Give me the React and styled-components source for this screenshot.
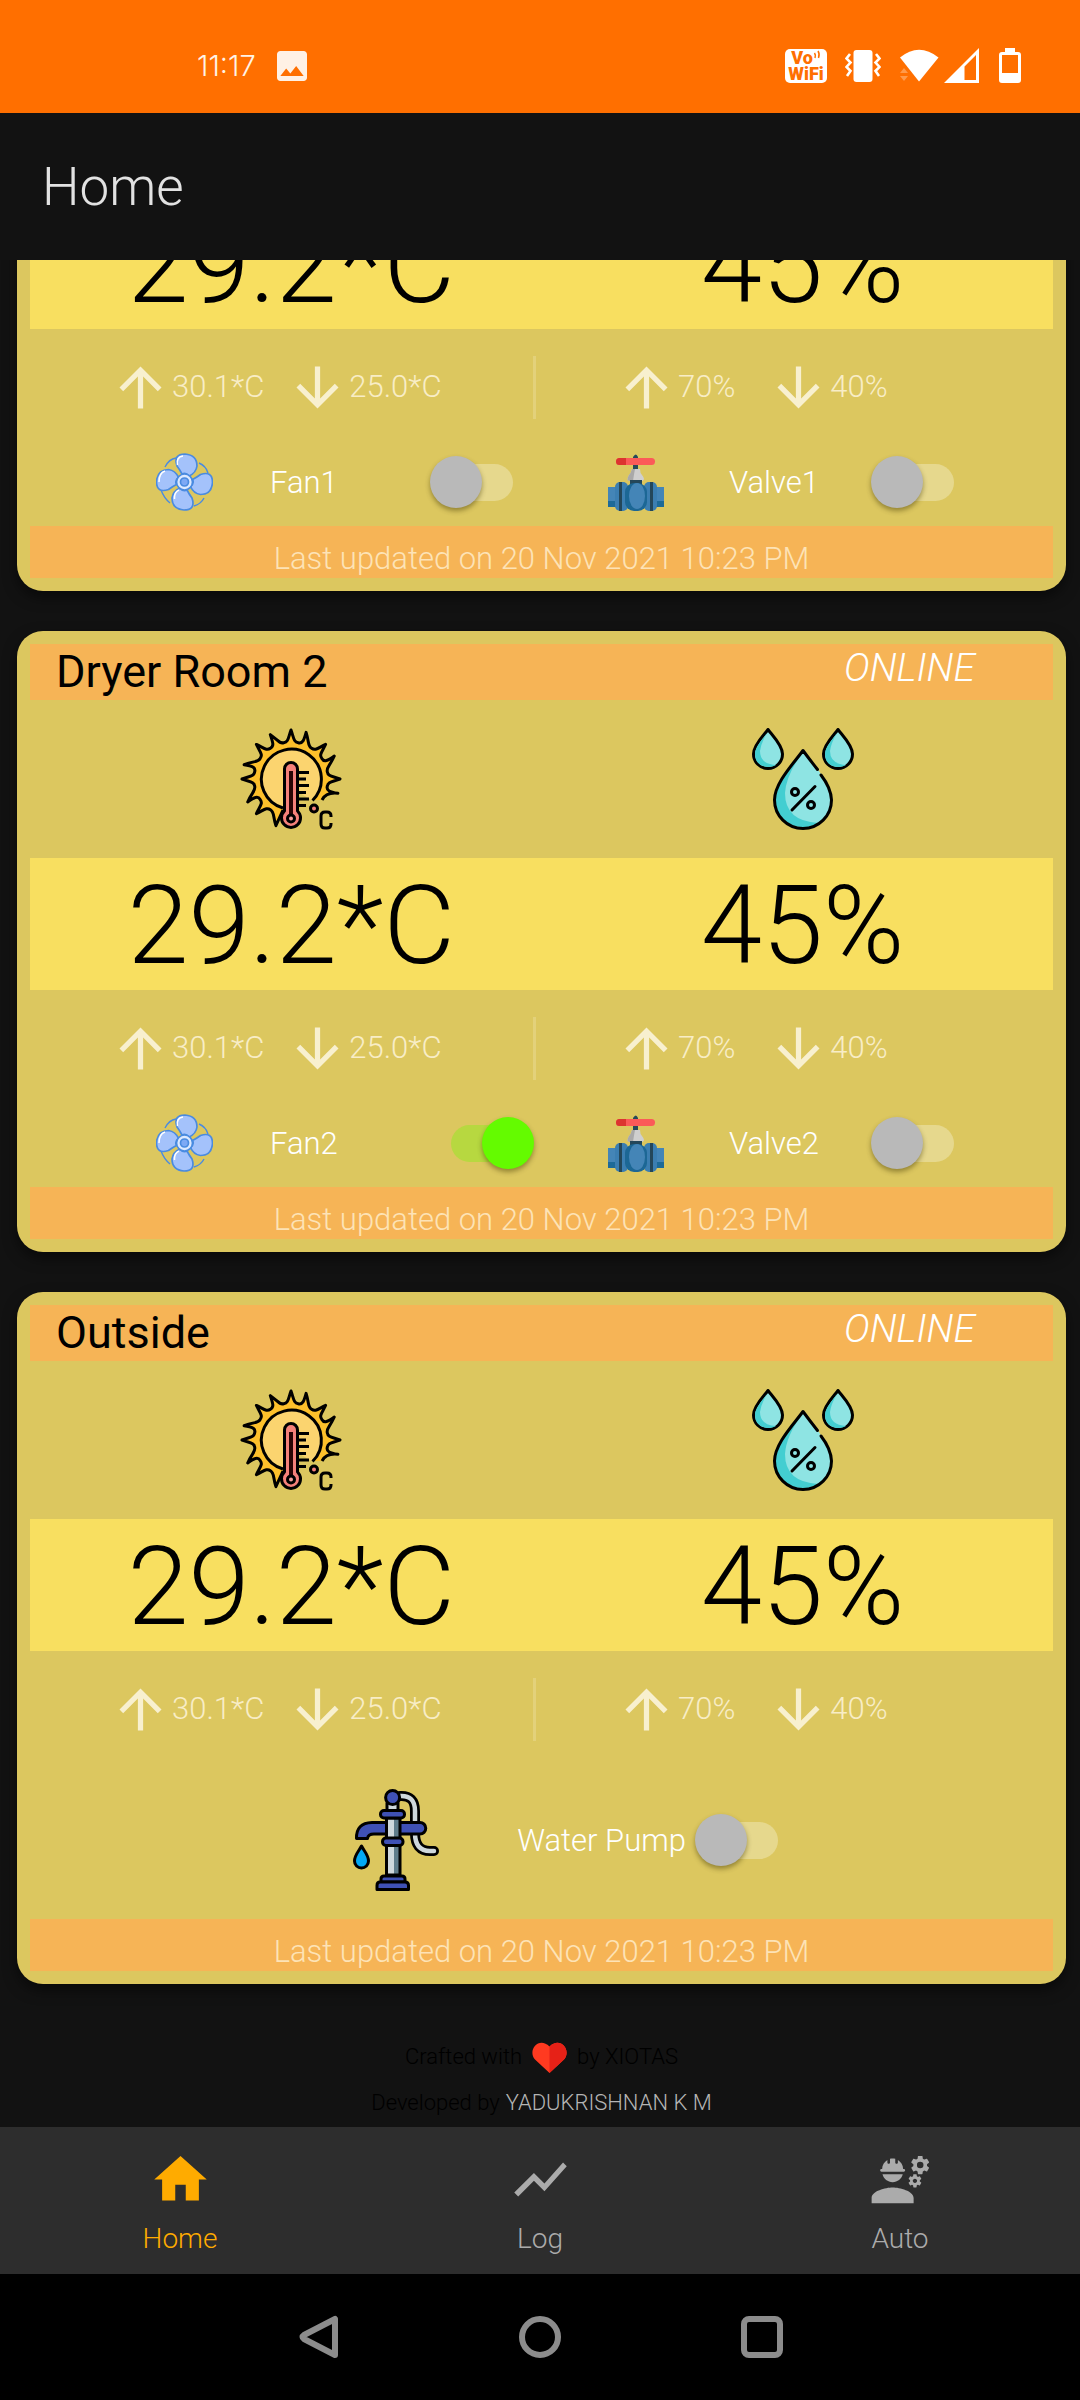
import React, { useId, useState } from "react";
import styled, { createGlobalStyle } from "styled-components";
import { MdArrowUpward, MdArrowDownward, MdHome, MdShowChart, MdEngineering, MdImage } from "react-icons/md";

const GlobalStyle = createGlobalStyle`
  * { box-sizing: border-box; }
  body {
    margin: 0;
    background: #000;
    font-family: Roboto, "Liberation Sans", Arial, sans-serif;
    font-weight: 300;
  }
`;

const Screen = styled.div`
  display: flex;
  flex-direction: column;
  height: 100vh;
  background: #121212;
  color: #fff;
`;

const StatusBar = styled.header`
  flex: none;
  display: flex;
  align-items: center;
  justify-content: space-between;
  height: 113px;
  padding: 18px 58px 0 197px;
  background: #ff6f00;
`;

const StatusGroup = styled.div`
  display: flex;
  align-items: center;
  gap: ${(p) => p.$gap}px;
`;

const Clock = styled.time`
  font-family: Inter, "Liberation Sans", sans-serif;
  font-size: 29px;
  line-height: 40px;
  color: #fff3e6;
`;

const AppBar = styled.div`
  flex: none;
  display: flex;
  align-items: center;
  height: 147px;
  padding: 0 42px;
`;

const AppTitle = styled.h1`
  margin: 0;
  font-size: 53px;
  line-height: 64px;
  font-weight: 300;
  color: #e2e2e2;
`;

const Scroller = styled.main`
  flex: 1;
  min-height: 0;
  display: flex;
  flex-direction: column-reverse;
  overflow-y: auto;
  scrollbar-width: none;
`;

const Feed = styled.div`
  display: flex;
  flex-direction: column;
  gap: 40px;
  padding: 20px 14px 0 17px;
`;

const Card = styled.section`
  padding: 13px;
  border-radius: 26px;
  background: #dcc75f;
  box-shadow: 0 6px 14px rgba(0, 0, 0, 0.5);
`;

const CardHeader = styled.div`
  display: flex;
  align-items: flex-start;
  justify-content: space-between;
  height: 56px;
  padding: 0 78px 0 26px;
  background: #f6b456;
`;

const RoomName = styled.h2`
  margin: 0;
  font-size: 45px;
  line-height: 56px;
  font-weight: 400;
  color: #000;
`;

const Online = styled.em`
  font-size: 39px;
  line-height: 48px;
`;

const Pair = styled.div`
  display: grid;
  grid-template-columns: 1fr 1fr;
  align-items: center;
  height: ${(p) => p.$height}px;
  background: ${(p) => p.$fill || "transparent"};
`;

const PairCell = styled.div`
  display: flex;
  justify-content: center;
  padding-left: 11px;
`;

const Reading = styled.strong`
  padding-top: 4px;
  font-size: 110px;
  line-height: 128px;
  font-weight: 300;
  color: #000;
`;

const StatsRow = styled.div`
  display: flex;
  align-items: center;
  height: 116px;
  padding-right: 14px;
`;

const StatsGroup = styled.div`
  flex: 1;
  display: flex;
  align-items: center;
  gap: ${(p) => p.$gap}px;
  padding-left: 79px;
`;

const StatsDivider = styled.span`
  width: 3px;
  height: 63px;
  background: #e3d17a;
`;

const Stat = styled.span`
  display: flex;
  align-items: center;
  font-size: 31px;
  line-height: 40px;
  color: #f8edc6;
  svg { color: #f8f0cf; }
`;

const ControlsRow = styled.div`
  display: grid;
  grid-template-columns: 378fr 367fr;
  gap: 74px;
  padding: 8px 78px 15px 126px;
`;

const Control = styled.div`
  display: flex;
  align-items: center;
`;

const PumpRow = styled.div`
  display: flex;
  align-items: center;
  justify-content: center;
  gap: 70px;
  height: 152px;
  padding: 0 0 6px 61px;
`;

const ControlLabel = styled.label`
  flex: 1;
  padding: 2px 0 0 ${(p) => p.$inset || 0}px;
  font-size: 31px;
  line-height: 40px;
  white-space: nowrap;
`;

const PumpControl = styled.div`
  display: flex;
  align-items: center;
  gap: 9px;
`;

const Toggle = styled.input`
  appearance: none;
  flex: none;
  display: grid;
  align-items: center;
  width: 104px;
  height: 52px;
  margin: 0;
  cursor: pointer;
  &::before {
    content: "";
    grid-area: 1 / 1;
    justify-self: center;
    width: 62px;
    height: 37px;
    border-radius: 19px;
    background: #e6d88d;
  }
  &::after {
    content: "";
    grid-area: 1 / 1;
    justify-self: start;
    width: 52px;
    height: 52px;
    border-radius: 50%;
    background: #b9b9b9;
    box-shadow: 0 3px 5px rgba(60, 50, 0, 0.45);
  }
  &:checked::before { background: #b7d840; }
  &:checked::after { justify-self: end; background: #64fb00; }
`;

const Updated = styled.p`
  margin: 0;
  height: 52px;
  padding-top: 14px;
  text-align: center;
  font-size: 31px;
  line-height: 38px;
  color: #fde3b6;
  background: #f6b456;
`;

const Credits = styled.footer`
  display: flex;
  flex-direction: column;
  align-items: center;
  gap: 4px;
  padding: 12px 0 3px 0;
  font-size: 22px;
  line-height: 42px;
  color: #000;
`;

const CreditLine = styled.div`
  display: flex;
  align-items: center;
  gap: ${(p) => p.$gap}px;
`;

const Author = styled.a`
  color: #b5b5b5;
  text-decoration: none;
`;

const TabBar = styled.nav`
  flex: none;
  display: grid;
  grid-template-columns: repeat(3, 1fr);
  height: 147px;
  background: #2d2d2d;
`;

const Tab = styled.button`
  display: flex;
  flex-direction: column;
  align-items: center;
  gap: 12px;
  padding: 21px 0 0;
  border: 0;
  background: none;
  font: inherit;
  font-size: 28px;
  line-height: 32px;
  color: ${(p) => (p.$active ? "#ffab00" : "#ababab")};
`;

const SystemNav = styled.nav`
  flex: none;
  display: flex;
  justify-content: center;
  align-items: center;
  gap: 156px;
  height: 126px;
  background: #000;
`;

const SystemButton = styled.button`
  display: flex;
  justify-content: center;
  width: 66px;
  padding: 0;
  border: 0;
  background: none;
`;

const VoWifi = styled.span`
  display: flex;
  flex-direction: column;
  align-items: center;
  width: 42px;
  height: 34px;
  padding-top: 1px;
  border-radius: 5px;
  background: #fff;
  color: #ff6f00;
  font-size: 18px;
  line-height: 16px;
  font-weight: 900;
`;

const VoLine = styled.span`
  display: flex;
`;

function VoWifiBadge() {
  return (
    <VoWifi>
      <VoLine>
        Vo
        <svg width="8" height="12" viewBox="0 0 8 12" fill="none" stroke="#ff6f00" strokeWidth="1.5">
          <path d="M1.5 3q1.5 2 .5 5M5 1q2 3 .5 7" />
        </svg>
      </VoLine>
      <span>WiFi</span>
    </VoWifi>
  );
}

const VibrateIcon = () => (
  <svg width="36" height="34" viewBox="0 0 36 34">
    <rect x="8.500" y="1" width="19" height="32" rx="3" fill="#fff" />
    <path d="M5 5L1.500 9.500L5.500 13.500L1.500 18L5.500 22L2 27M31 5L34.500 9.500L30.500 13.500L34.500 18L30.500 22L34 27" fill="none" stroke="#fff" strokeWidth="2.600" />
  </svg>
);

const WifiIcon = () => (
  <svg width="40" height="34" viewBox="0 0 40 34">
    <path d="M1 8.500Q20-7 39.500 8.500L20 32.500Z" fill="#fff" />
    <path d="M1 24l4-5 4 5zM1 27h8l-4 5z" fill="#ff9a4a" />
  </svg>
);

const SignalIcon = () => (
  <svg width="36" height="36" viewBox="0 0 36 36">
    <path d="M35 0V35H0ZM32 7L20.500 18.500V32H32Z" fill="#fff" fillRule="evenodd" />
  </svg>
);

const BatteryIcon = () => (
  <svg width="24" height="36" viewBox="0 0 24 36">
    <path d="M7 0h10v4h3q3 0 3 3v25q0 3-3 3H4q-3 0-3-3V7q0-3 3-3h3zM4 7v18h16V7z" fill="#fff" fillRule="evenodd" />
  </svg>
);

const TIPS = [-162, -135, -118, -90, -73, -45, -25, 0, 18, 45, 62, 90, 107];

function polar(radius, degrees) {
  const a = (degrees * Math.PI) / 180;
  return `${(51 + radius * Math.sin(a)).toFixed(1)} ${(51 - radius * Math.cos(a)).toFixed(1)}`;
}

function sunOutline() {
  let d = `M43 82L${polar(49, TIPS[0])}`;
  for (let i = 1; i < TIPS.length; i += 1) {
    const valley = -168.75 + i * 22.5;
    const rayBefore = valley - 11.25;
    const rayAfter = valley + 11.25;
    d += `C${polar(41, rayBefore + 4)} ${polar(37, rayBefore + 4)} ${polar(37, valley)}`;
    d += `C${polar(37, rayAfter - 4)} ${polar(41, rayAfter - 4)} ${polar(49, TIPS[i])}`;
  }
  return `${d}Q86 64 82 72`;
}

function TemperatureIcon() {
  const sun = sunOutline();
  return (
    <svg width="102" height="102" viewBox="0 0 102 102" fill="none" stroke="#000" strokeWidth="3" strokeLinejoin="round">
      <path d={`${sun}L72 72L51 51Z`} fill="#fdc02b" stroke="none" />
      <path d={sun} />
      <path d="M72.500 72.500A30 30 0 1 0 43 80L51 60Z" fill="#fbd46f" stroke="none" />
      <path d="M72.500 72.500A30 30 0 1 0 43 80" />
      <path d="M44.500 83V41a6.500 6.500 0 0 1 13 0V83a9.500 9.500 0 1 1-13 0Z" fill="#f5817a" />
      <path d="M51 43V87" stroke="#2a0505" strokeWidth="4" />
      <circle cx="51" cy="90.500" r="3.500" fill="#f5a09a" />
      <path d="M58 44.500h11M58 51h8M58 57.500h11M58 64.500h8M58 71h11M58 77.500h8" />
      <circle cx="74" cy="80.500" r="3.500" fill="#f5817a" />
      <path d="M91 89v-1q0-4-4-4h-2q-4 0-4 4v8q0 4 4 4h2q4 0 4-4v-1" />
    </svg>
  );
}

const HumidityIcon = () => (
  <svg width="102" height="102" viewBox="0 0 102 102" fill="none" stroke="#000" strokeWidth="3" strokeLinecap="round" strokeLinejoin="round">
    {[0, 70].map((x) => (
      <g key={x} transform={`translate(${x} 0)`}>
        <path d="M16 1.500C12 7 1.500 17 1.500 26a14.500 14.500 0 0 0 29 0C30.500 17 20 7 16 1.500Z" fill="#8ee4e3" />
        <path d="M15 5C11 11 3 19 3 26q0 12 13 13q5 0 8-2Q8 36 8 23Q9 15 15 5Z" fill="#43ced1" stroke="none" />
      </g>
    ))}
    <path d="M51 22.500C42 35 22.500 55 22.500 72a28.500 28.500 0 0 0 57 0C79.500 55 60 35 51 22.500Z" fill="#8ee4e3" stroke="none" />
    <path d="M51 24C42 36 23 56 23 72A28 28 0 0 0 66 95Q33 93 33 65Q34 47 51 24Z" fill="#43ced1" stroke="none" />
    <path d="M65.500 41.500Q58 32 51 22.500C42 35 22.500 55 22.500 72a28.500 28.500 0 0 0 57 0Q79 60 69 47" />
    <circle cx="43" cy="64" r="3.500" />
    <circle cx="59" cy="77" r="3.500" />
    <path d="M63 58.500L40 82" />
  </svg>
);

const FanIcon = () => (
  <svg width="57" height="58" viewBox="0 0 57 58" fill="none" stroke="#4a8be0" strokeWidth="1.700">
    <path d="M9 14Q13 6 20 5M43 10Q50 13 52 20M14 50Q8 45 5 37M48 45Q45 51 38 53" strokeWidth="1.400" />
    {[0, 90, 180, 270].map((angle) => (
      <g key={angle} transform={`rotate(${angle} 28.500 29)`}>
        <path d="M26 21Q24 17 21 13Q17 1 29 1Q41 2 41 13Q40 20 33 23Q30 19 26 21Z" fill="#a4c2fb" />
      </g>
    ))}
    <path d="M21.500 12Q20 4 27 3M3 29Q3 20 9 18M18.500 46Q18 39 23 37" stroke="#fff" strokeWidth="1.500" />
    <circle cx="28.500" cy="29" r="8" fill="#dce9ff" />
    <circle cx="28.500" cy="29" r="4" fill="#7da9f5" />
  </svg>
);

const ValveIcon = () => (
  <svg width="56" height="57" viewBox="0 0 56 57">
    <path d="M25 3q3-5 5 0v13h-5z" fill="#27495a" />
    <rect x="8" y="4" width="39" height="7" rx="3.500" fill="#fb5a58" />
    <path d="M11.500 4H18v7h-6.500a3.500 3.500 0 0 1 0-7z" fill="#dc342f" />
    <path d="M24 15h8q0 4 2 6q4 5 0 6H21q-3-1 0-6q2-2 3-6z" fill="#cfcfcf" />
    <path d="M24 15h3q-1 5-2 12h-4q-3-1 0-6q2-2 3-6z" fill="#a9a9a9" />
    <path d="M22 26h12v5H22z" fill="#24475a" />
    <path d="M0 33h56v20H0z" fill="#4485b7" />
    <path d="M0 47h56v6H0z" fill="#1d6a98" />
    <rect x="7" y="28" width="13" height="29" rx="5" fill="#3b7eb1" />
    <rect x="36" y="28" width="13" height="29" rx="5" fill="#3b7eb1" />
    <rect x="17" y="29" width="22" height="28" rx="9" fill="#1c6795" />
    <ellipse cx="29" cy="42" rx="8" ry="13" fill="#4485b7" />
    <path d="M11 28h3v29h-3zM42 28h3v29h-3z" fill="#24475a" />
  </svg>
);

const PumpIcon = () => (
  <svg width="102" height="102" viewBox="0 0 102 102" fill="none" stroke="#000" strokeWidth="3" strokeLinejoin="round">
    <path d="M55 7Q70 6 70 22V44Q70 62 85 62H89" strokeWidth="10" strokeLinecap="round" />
    <path d="M55 7Q70 6 70 22V44Q70 62 85 62H89" stroke="#cfd8dc" strokeWidth="4.500" strokeLinecap="round" />
    <path d="M42 14h11v8H42z" fill="#cfd8dc" />
    <path d="M11.500 49.500Q11 34 27 33.500H75a5.500 5.500 0 0 1 0 11.500H29Q23 45 22.500 49.500Z" fill="#3f51b5" />
    <path d="M41.500 29H55V86H41.500Z" fill="#cfd8dc" stroke="none" />
    <path d="M49 29h6v57h-6z" fill="#607d8b" stroke="none" />
    <path d="M41.500 29H55V86H41.500Z" />
    <circle cx="47.600" cy="8.500" r="7" fill="#3f51b5" />
    <rect x="35.500" y="21.500" width="24" height="7.500" rx="3.500" fill="#3f51b5" />
    <rect x="37.500" y="49" width="20.500" height="7.500" rx="3.500" fill="#3f51b5" />
    <path d="M36 93v-3q0-3 3-3h18q3 0 3 3v3z" fill="#3f51b5" />
    <path d="M32 100.500v-4q0-3.500 3-3.500h25q3.500 0 3.500 3.500v4z" fill="#3f51b5" />
    <path d="M16.500 57C14 62 9.500 66 9.500 72a7 7 0 0 0 14 0C23.500 66 19 62 16.500 57Z" fill="#03a9f4" />
  </svg>
);

const HeartIcon = () => (
  <svg width="35" height="31" viewBox="0 0 35 31">
    <path d="M17.500 31L3 17.500C-5 8 7-6 17.500 4.500C28-6 40 8 32 17.500Z" fill="#ff3a20" />
    <path d="M17.500 31V4.500C28-6 40 8 32 17.500Z" fill="#e62117" />
  </svg>
);

function Switch({ id, defaultOn }) {
  const [on, setOn] = useState(Boolean(defaultOn));
  return <Toggle id={id} type="checkbox" role="switch" checked={on} onChange={(e) => setOn(e.target.checked)} />;
}

function DeviceControl({ icon, name, inset, on }) {
  const id = useId();
  return (
    <Control>
      {icon}
      <ControlLabel htmlFor={id} $inset={inset}>{name}</ControlLabel>
      <Switch id={id} defaultOn={on} />
    </Control>
  );
}

function Stats({ high, low, gap }) {
  return (
    <StatsGroup $gap={gap}>
      <Stat><MdArrowUpward size={63} />{high}</Stat>
      <Stat><MdArrowDownward size={63} />{low}</Stat>
    </StatsGroup>
  );
}

function RoomCard({ name, children }) {
  return (
    <Card>
      <CardHeader>
        <RoomName>{name}</RoomName>
        <Online>ONLINE</Online>
      </CardHeader>
      <Pair $height={158}>
        <PairCell><TemperatureIcon /></PairCell>
        <PairCell><HumidityIcon /></PairCell>
      </Pair>
      <Pair $height={132} $fill="#f8df60">
        <PairCell><Reading>29.2*C</Reading></PairCell>
        <PairCell><Reading>45%</Reading></PairCell>
      </Pair>
      <StatsRow>
        <Stats high="30.1*C" low="25.0*C" gap={22} />
        <StatsDivider />
        <Stats high="70%" low="40%" gap={32} />
      </StatsRow>
      {children}
      <Updated>Last updated on 20 Nov 2021 10:23 PM</Updated>
    </Card>
  );
}

function DryerRoom({ number, fanOn }) {
  return (
    <RoomCard name={`Dryer Room ${number}`}>
      <ControlsRow>
        <DeviceControl icon={<FanIcon />} name={`Fan${number}`} inset={57} on={fanOn} />
        <DeviceControl icon={<ValveIcon />} name={`Valve${number}`} inset={65} />
      </ControlsRow>
    </RoomCard>
  );
}

export default function App() {
  const pumpId = useId();
  return (
    <>
      <GlobalStyle />
      <Screen>
        <StatusBar>
          <StatusGroup $gap={16}>
            <Clock>11:17</Clock>
            <MdImage size={40} color="#fff1e5" />
          </StatusGroup>
          <StatusGroup $gap={18}>
            <VoWifiBadge />
            <VibrateIcon />
            <StatusGroup $gap={5}>
              <WifiIcon />
              <SignalIcon />
            </StatusGroup>
            <BatteryIcon />
          </StatusGroup>
        </StatusBar>
        <AppBar>
          <AppTitle>Home</AppTitle>
        </AppBar>
        <Scroller>
          <Feed>
            <DryerRoom number={1} />
            <DryerRoom number={2} fanOn />
            <RoomCard name="Outside">
              <PumpRow>
                <PumpIcon />
                <PumpControl>
                  <ControlLabel htmlFor={pumpId}>Water Pump</ControlLabel>
                  <Switch id={pumpId} />
                </PumpControl>
              </PumpRow>
            </RoomCard>
            <Credits>
              <CreditLine $gap={10}>
                <span>Crafted with</span>
                <HeartIcon />
                <span>by XIOTAS</span>
              </CreditLine>
              <CreditLine $gap={6}>
                <span>Developed by</span>
                <Author href="#author">YADUKRISHNAN K M</Author>
              </CreditLine>
            </Credits>
          </Feed>
        </Scroller>
        <TabBar>
          <Tab $active type="button"><MdHome size={63} />Home</Tab>
          <Tab type="button"><MdShowChart size={63} />Log</Tab>
          <Tab type="button"><MdEngineering size={63} />Auto</Tab>
        </TabBar>
        <SystemNav>
          <SystemButton type="button" aria-label="Back">
            <svg width="40" height="44" viewBox="0 0 40 44">
              <path d="M37 4V40L6 24Q3 22 6 20Z" fill="none" stroke="#8c8c8c" strokeWidth="6" strokeLinejoin="round" />
            </svg>
          </SystemButton>
          <SystemButton type="button" aria-label="Home screen">
            <svg width="42" height="42" viewBox="0 0 42 42">
              <circle cx="21" cy="21" r="18" fill="none" stroke="#8c8c8c" strokeWidth="6" />
            </svg>
          </SystemButton>
          <SystemButton type="button" aria-label="Recent apps">
            <svg width="42" height="42" viewBox="0 0 42 42">
              <rect x="3" y="3" width="36" height="36" rx="5" fill="none" stroke="#8c8c8c" strokeWidth="6" />
            </svg>
          </SystemButton>
        </SystemNav>
      </Screen>
    </>
  );
}
